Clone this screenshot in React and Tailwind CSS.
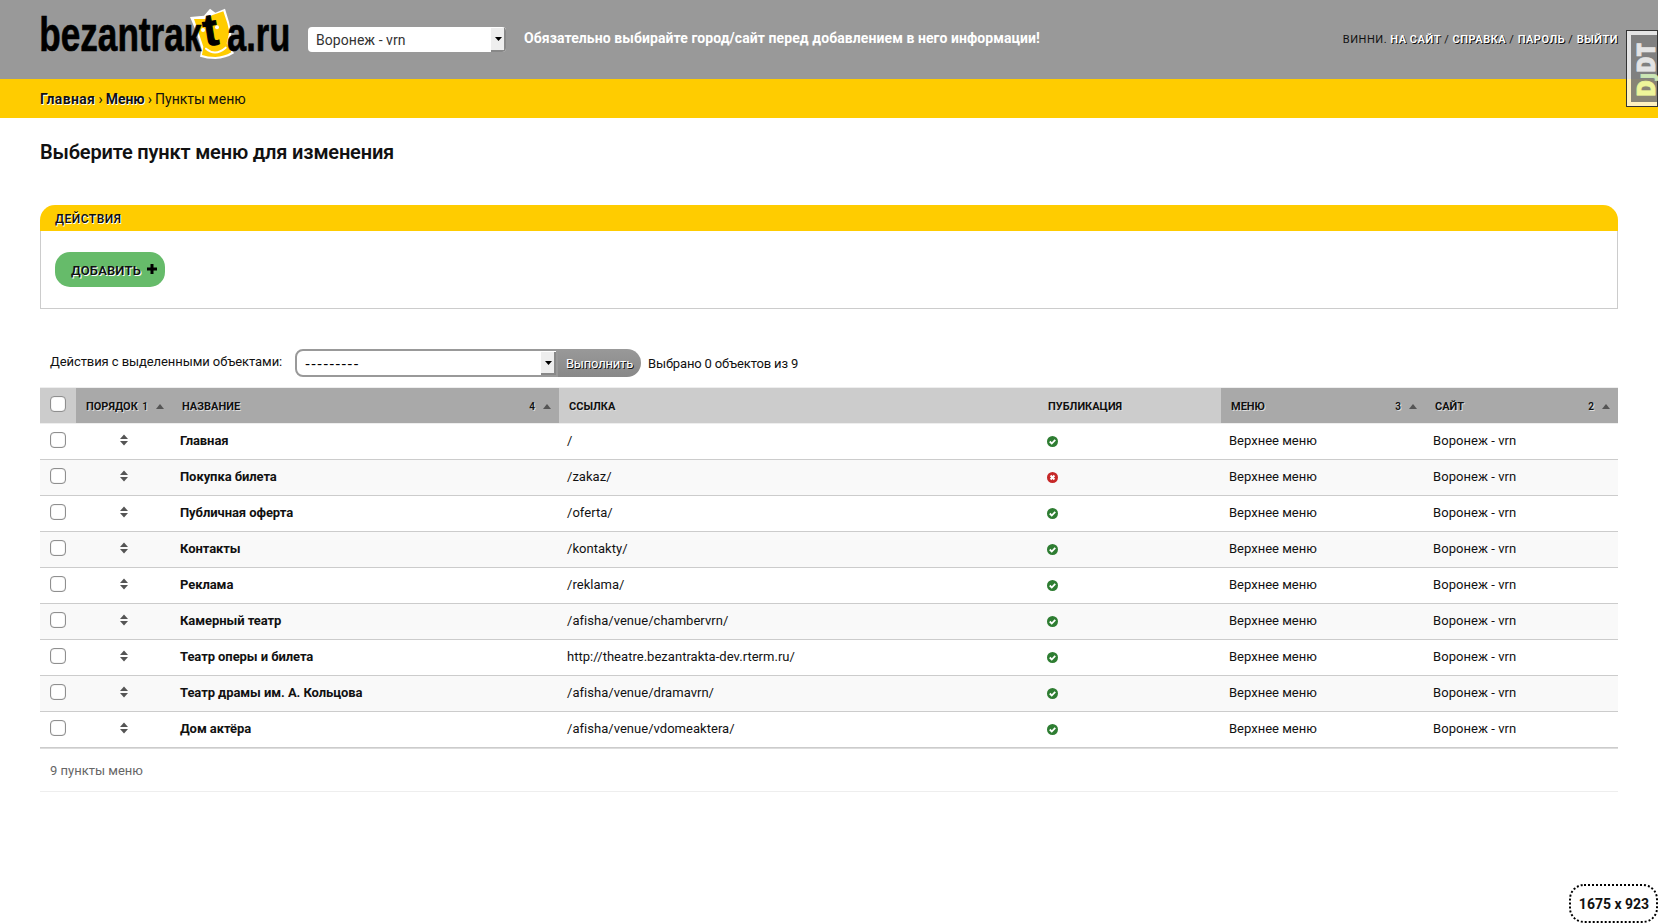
import React from 'react';

const rows = [
  ['Главная', '/', true],
  ['Покупка билета', '/zakaz/', false],
  ['Публичная оферта', '/oferta/', true],
  ['Контакты', '/kontakty/', true],
  ['Реклама', '/reklama/', true],
  ['Камерный театр', '/afisha/venue/chambervrn/', true],
  ['Театр оперы и билета', 'http://theatre.bezantrakta-dev.rterm.ru/', true],
  ['Театр драмы им. А. Кольцова', '/afisha/venue/dramavrn/', true],
  ['Дом актёра', '/afisha/venue/vdomeaktera/', true],
];

const COLS = 'grid grid-cols-[36px_96px_387px_479px_183px_204px_193px]';

function Logo() {
  return (
    <svg className="block h-[53px] w-[250px] overflow-visible" viewBox="30 21 750 159" fontFamily="Liberation Sans, sans-serif" fontWeight="700">
      <path d="M480 51 L522 47 L540 26 L556 38 L585 26 L597 66 L604 100 L597 132 L612 160 Q588 176 556 177 Q530 177 510 170 L515 148 L499 96 Z" fill="#fff" />
      <path d="M492 57 L530 57 L546 46 L580 34 L592 70 L598 96 L590 130 L604 157 Q582 170 556 171 Q532 171 516 165 L520 140 L504 92 Z" fill="#fc0" />
      <circle cx="519" cy="90" r="6" fill="#fff" />
      <circle cx="561" cy="82" r="6" fill="#fff" />
      <path d="M528 146 Q556 170 587 143" fill="none" stroke="#fff" strokeWidth="6" strokeLinecap="round" />
      <text x="28" y="152" fontSize="143" stroke="#000" strokeWidth="2" textLength="486" lengthAdjust="spacingAndGlyphs">bezantraк</text>
      <g transform="rotate(-9 541 90)">
        <text x="519" y="136" fontSize="136" stroke="#000" strokeWidth="3" textLength="44" lengthAdjust="spacingAndGlyphs">t</text>
      </g>
      <text x="591" y="152" fontSize="143" stroke="#000" strokeWidth="2" textLength="190" lengthAdjust="spacingAndGlyphs">a.ru</text>
    </svg>
  );
}

function SelectArrow({ className }) {
  return (
    <span className={`flex w-[15px] items-center justify-center border-r-2 border-b-2 border-[#888] bg-[#eee] ${className}`}>
      <svg className="ml-px h-[4px] w-[7px]" viewBox="0 0 7 4"><path d="M0 0H7L3.5 4Z" /></svg>
    </span>
  );
}

function Checkbox() {
  return <span className="block size-4 rounded-[4px] border border-[#8f8f8f] bg-white shadow-[inset_0_0_1px_#999]" />;
}

function HeadCell({ label, order, sorted }) {
  return (
    <div className={`flex items-center justify-between pt-[2px] pr-2 pl-[10px] ${sorted ? 'bg-[#a9a9a9]' : 'bg-[#ccc]'}`}>
      <span className="pt-px text-[11px] leading-4 font-bold uppercase [text-shadow:1px_1px_0_#ddd]">{label}</span>
      {order && (
        <span className="flex items-center gap-[8px] text-[10px] font-semibold [text-shadow:1px_1px_0_#ddd]">
          {order}
          <svg className="h-[5px] w-[8px]" viewBox="0 0 8 5"><path d="M0 5L4 0L8 5Z" fill="#555" /></svg>
        </span>
      )}
    </div>
  );
}

function Status({ ok }) {
  return (
    <svg className="size-[11px]" viewBox="0 0 12 12">
      <circle cx="6" cy="6" r="6" fill={ok ? '#2e7d32' : '#c62828'} />
      {ok ? (
        <path d="M3 6L5.2 8.2L9 4.3" fill="none" stroke="#fff" strokeWidth="2" />
      ) : (
        <path d="M3.9 3.9L8.1 8.1M8.1 3.9L3.9 8.1" fill="none" stroke="#fff" strokeWidth="2.2" />
      )}
    </svg>
  );
}

function DebugHandle() {
  return (
    <div className="absolute top-[30px] left-[1626px] h-[77px] w-[32px] border border-[#333] bg-white/75 py-1 pl-1">
      <svg className="block h-[67px] w-[26px] overflow-visible bg-[#555]/70" viewBox="0 0 26 67" fontFamily="Open Sans, sans-serif" fontWeight="800">
        <g transform="translate(24 61) rotate(-90)" strokeWidth="0.8">
          <text x="-1" y="0" fontSize="25" fill="#eef59a" stroke="#eef59a" textLength="17" lengthAdjust="spacingAndGlyphs">D</text>
          <text x="17" y="-1" fontSize="17" fill="#cbe6b5" stroke="#cbe6b5" textLength="6" lengthAdjust="spacingAndGlyphs">J</text>
          <text x="23" y="0" fontSize="25" fill="#e4e4e4" stroke="#e4e4e4" textLength="30" lengthAdjust="spacingAndGlyphs">DT</text>
        </g>
      </svg>
    </div>
  );
}

export default function App() {
  const link = 'font-semibold text-white [text-shadow:1px_1px_0_#111]';
  return (
    <div className="relative h-[923px] w-[1658px] overflow-hidden bg-white font-[Roboto,sans-serif] text-[13px] text-[#111] whitespace-nowrap">
      <header className="flex h-[79px] items-start bg-[#999] px-10">
        <div className="mt-[7px] w-[268px]"><Logo /></div>
        <div className="mt-[27px] flex h-[25px] w-[198px] overflow-hidden rounded-[4px] bg-white pl-[8px] text-[14px] leading-[26px] tracking-[0.05px] text-[#333]">
          <span className="flex-1">Воронеж - vrn</span>
          <SelectArrow className="mt-px" />
        </div>
        <div className="mt-[28px] ml-[18px] text-[14px] leading-5 font-bold tracking-[0.08px] text-white">Обязательно выбирайте город/сайт перед добавлением в него информации!</div>
        <nav className="mt-[32px] ml-auto text-[11px] leading-4 tracking-[0.52px] uppercase">
          Винни. <span className={link}>На сайт</span> / <span className={link}>Справка</span> / <span className={link}>Пароль</span> / <span className={link}>Выйти</span>
        </nav>
      </header>
      <div className="h-[39px] bg-[#fc0] px-10 text-[14px] leading-[40px]">
        <span className="font-bold tracking-[0.35px] [text-shadow:1px_1px_0_#fff]">Главная</span><span className="tracking-[-0.2px]"> › </span><span className="font-bold tracking-[-0.1px] [text-shadow:1px_1px_0_#fff]">Меню</span><span className="tracking-[-0.2px]"> › </span>Пункты меню
      </div>
      <main className="px-10 pt-[20px]">
        <h1 className="h-[67px] text-[20px] leading-7 font-semibold tracking-[-0.17px]">Выберите пункт меню для изменения</h1>
        <section className="h-[105px]">
          <h2 className="h-[26px] rounded-t-[15px] bg-[#fc0] pl-[15px] text-[12px] leading-[28px] font-semibold tracking-[0.5px] uppercase [text-shadow:1px_1px_0_#fff]">Действия</h2>
          <div className="h-[78px] border border-t-0 border-[#ccc] pt-[21px] pl-[14px]">
            <button className="flex h-[35px] w-[110px] items-center rounded-[15px] bg-[#66bb6a] pt-[3px] pl-4 text-[13px] font-semibold tracking-[0.15px] uppercase [text-shadow:1px_1px_0_#fff]">
              Добавить
              <svg className="mb-[4px] ml-[6px] size-[10px]" viewBox="0 0 10 10"><path d="M3.5 0h3v3.5H10v3H6.500V10h-3V6.500H0v-3h3.500Z" fill="#000" /></svg>
            </button>
          </div>
        </section>
        <div className="mt-[39px] flex h-[28px] pl-[10px]">
          <span className="w-[245px] leading-[26px] tracking-[-0.08px]">Действия с выделенными объектами:</span>
          <div className="flex w-[263px] rounded-l-[8px] border-2 border-[#999] bg-white pl-[8px] text-black">
            <span className="flex-1 text-[14px] leading-[26px] tracking-[1px] font-['DejaVu_Sans',sans-serif]">---------</span>
            <SelectArrow className="mt-px" />
          </div>
          <button className="w-[83px] rounded-r-[14px] bg-linear-to-b from-[#999] to-[#888] text-[13px] leading-[29px] tracking-[-0.2px] text-white [text-shadow:1px_1px_0_#111]">Выполнить</button>
          <span className="ml-[7px] leading-[29px] tracking-[-0.15px]">Выбрано 0 объектов из 9</span>
        </div>
        <div className="mt-[10px]">
          <div className={`${COLS} h-[37px] border-y border-[#eee]`}>
            <div className="bg-[#ccc] pt-2 pl-[10px]"><Checkbox /></div>
            <HeadCell label="Порядок" order="1" sorted />
            <HeadCell label="Название" order="4" sorted />
            <HeadCell label="Ссылка" />
            <HeadCell label="Публикация" />
            <HeadCell label="Меню" order="3" sorted />
            <HeadCell label="Сайт" order="2" sorted />
          </div>
          {rows.map(([name, url, ok], i) => (
            <div key={name} className={`${COLS} h-[36px] border-b border-[#ccc] leading-[34px] ${i % 2 ? 'bg-[#f9f9f9]' : 'bg-white'}`}>
              <div className="pt-2 pl-[10px]"><Checkbox /></div>
              <div className="pt-[10px] pl-[44px]">
                <svg className="h-[12px] w-[8px]" viewBox="0 0 8 12"><path d="M0 5L4 0.500L8 5ZM0 7H8L4 11.500Z" fill="#555" /></svg>
              </div>
              <div className="pl-2 font-bold tracking-[-0.07px]">{name}</div>
              <div className="pl-2 tracking-[0.03px]">{url}</div>
              <div className="pt-[12px] pl-[9px]"><Status ok={ok} /></div>
              <div className="pl-2">Верхнее меню</div>
              <div className="pl-2 tracking-[0.06px]">Воронеж - vrn</div>
            </div>
          ))}
          <div className="h-[44px] border-t border-b border-t-[#ddd] border-b-[#eee] pl-[10px] leading-[43px] text-[#666]">9 пункты меню</div>
        </div>
      </main>
      <DebugHandle />
      <div className="absolute top-[884px] left-[1569px] h-[39px] w-[89px] rounded-[15px] border-2 border-dotted border-black bg-white pl-px text-center text-[14px] leading-[36px] font-bold">1675 x 923</div>
    </div>
  );
}
